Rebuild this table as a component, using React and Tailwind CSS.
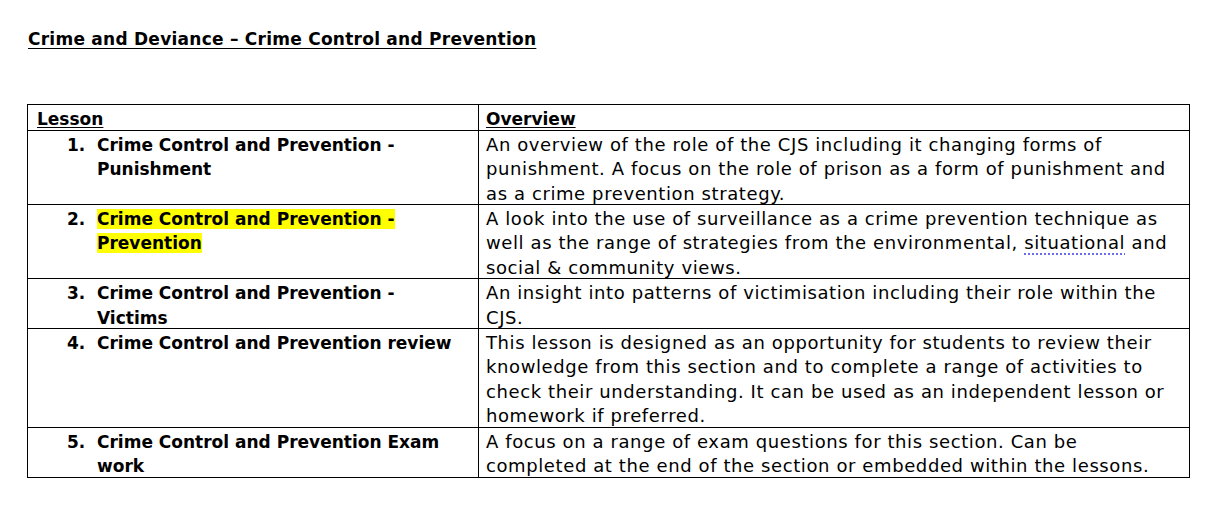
const lessons = [
  {
    title: "Crime Control and Prevention - Punishment",
    overview:
      "An overview of the role of the CJS including it changing forms of punishment. A focus on the role of prison as a form of punishment and as a crime prevention strategy.",
  },
  {
    title: "Crime Control and Prevention - Prevention",
    highlight: true,
    overview: (
      <>
        A look into the use of surveillance as a crime prevention technique as well as the range of strategies from the environmental,{" "}
        <span className="underline decoration-dotted decoration-2 decoration-[#6b6bf0] underline-offset-[4px]">situational</span> and social &amp; community views.
      </>
    ),
  },
  {
    title: "Crime Control and Prevention - Victims",
    overview: "An insight into patterns of victimisation including their role within the CJS.",
  },
  {
    title: "Crime Control and Prevention review",
    overview:
      "This lesson is designed as an opportunity for students to review their knowledge from this section and to complete a range of activities to check their understanding. It can be used as an independent lesson or homework if preferred.",
  },
  {
    title: "Crime Control and Prevention Exam work",
    overview:
      "A focus on a range of exam questions for this section. Can be completed at the end of the section or embedded within the lessons.",
  },
];

// cell text sits ~2px lower than the line box, without growing the row
const Cell = ({ className = "", children }) => (
  <td className={`border border-black p-0 align-top ${className}`}>
    <div className="pt-[2px] -mb-[2px]">{children}</div>
  </td>
);

export default function App() {
  return (
    <div className="min-h-[523px] bg-white pl-[27px] pt-[27px] text-black font-['DejaVu_Sans',sans-serif] text-[17px] leading-[24.4px]">
      {/* Heading */}
      <h1 className="font-bold underline underline-offset-[3px] pl-px tracking-[0.25px]">
        Crime and Deviance – Crime Control and Prevention
      </h1>

      {/* Lesson table */}
      <table className="mt-[53px] w-[1163px] border-collapse table-fixed">
        <colgroup>
          <col className="w-[451px]" />
          <col />
        </colgroup>
        <thead>
          <tr>
            <th className="border border-black p-0 text-left font-bold">
              <div className="pt-[2px] -mb-[2px] px-[9px] underline underline-offset-[2px]">Lesson</div>
            </th>
            <th className="border border-black p-0 text-left font-bold">
              <div className="pt-[2px] -mb-[2px] px-[7px] underline underline-offset-[2px]">Overview</div>
            </th>
          </tr>
        </thead>
        <tbody>
          {lessons.map((l, i) => (
            <tr key={i}>
              <Cell className="font-bold">
                <div className="flex px-[9px]">
                  <span className="w-[60px] shrink-0 pl-[30px]">{i + 1}.</span>
                  <span>
                    <span className={l.highlight ? "bg-[#ffff00]" : ""}>{l.title}</span>
                  </span>
                </div>
              </Cell>
              <Cell className="text-[18px] tracking-[0.6px]">
                <div className="px-[7px]">{l.overview}</div>
              </Cell>
            </tr>
          ))}
        </tbody>
      </table>
    </div>
  );
}
